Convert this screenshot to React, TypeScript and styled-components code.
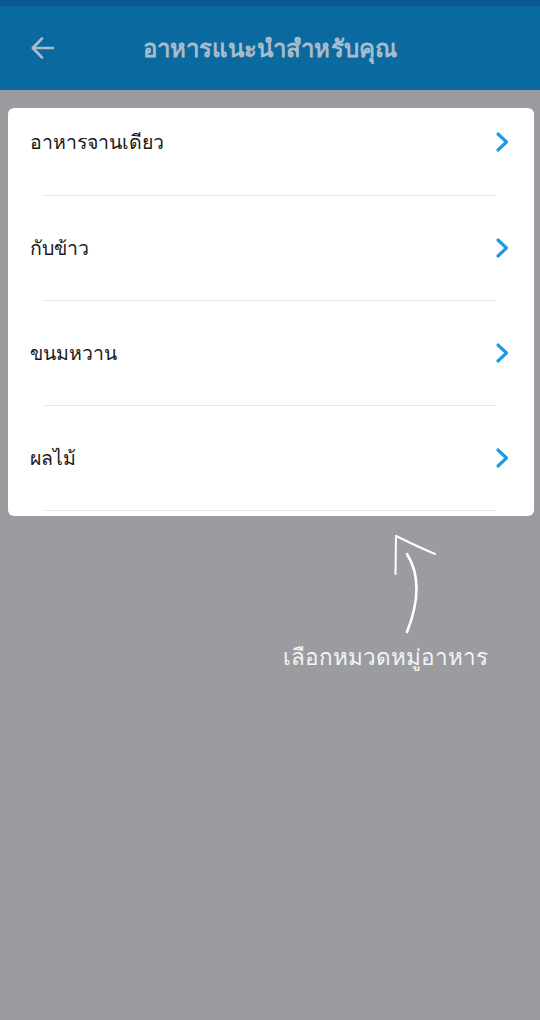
import React from "react";
import styled, { createGlobalStyle } from "styled-components";

const Global = createGlobalStyle`
  html, body { margin: 0; padding: 0; background: #9b9ca0; }
  body { font-family: "Noto Sans", "Open Sans", sans-serif; }
`;

const Page = styled.div`
  width: 540px;
  min-height: 1020px;
  background: #9b9ca0;
  display: flex;
  flex-direction: column;
`;

const StatusBar = styled.div`
  height: 6px;
  background: #0b5890;
`;

const Header = styled.header`
  height: 84px;
  background: #0a6aa0;
  display: flex;
  align-items: center;
  position: relative;
  justify-content: center;
`;

const BackButton = styled.button`
  position: absolute;
  left: 26px;
  top: 50%;
  transform: translateY(-50%);
  background: none;
  border: none;
  padding: 4px;
  display: flex;
`;

const Title = styled.h1`
  margin: 0;
  font-size: 24px;
  font-weight: 700;
  color: #a8bccb;
  letter-spacing: 0.2px;
`;

const Content = styled.main`
  padding: 18px 6px 0 8px;
  display: flex;
  flex-direction: column;
`;

const Card = styled.div`
  background: #ffffff;
  border-radius: 6px;
  display: flex;
  flex-direction: column;
  overflow: hidden;
  padding-bottom: 5px;
`;

const Row = styled.div<{ $first?: boolean }>`
  height: ${(p) => (p.$first ? 88 : 105)}px;
  display: flex;
  flex-direction: column;
`;

const RowMain = styled.div<{ $first?: boolean }>`
  flex: 1;
  display: flex;
  align-items: flex-start;
  justify-content: space-between;
  padding: ${(p) => (p.$first ? 19 : 37)}px 24px 0 22px;
`;

const Label = styled.span`
  font-size: 19.5px;
  color: #1a1a1a;
  line-height: 30px;
`;

const Chevron = styled.span`
  display: flex;
  margin-top: 4px;
`;

const Divider = styled.div`
  height: 1px;
  background: #e6e8ea;
  margin: 0 38px 0 36px;
`;

const HintArea = styled.div`
  position: relative;
  height: 170px;
`;

const ArrowSvg = styled.svg`
  position: absolute;
  left: 376px;
  top: 16px;
`;

const HintText = styled.div`
  position: absolute;
  left: 275px;
  top: 126px;
  font-family: "Noto Serif", "Liberation Serif", serif;
  font-size: 22.5px;
  font-weight: 300;
  line-height: 30px;
  color: #f4f4f4;
`;

const items = ["อาหารจานเดียว", "กับข้าว", "ขนมหวาน", "ผลไม้"];

export default function App() {
  return (
    <>
      <Global />
      <Page>
        <StatusBar />
        <Header>
          <BackButton aria-label="back">
            <svg width="26" height="26" viewBox="0 0 26 26" fill="none" stroke="#a9bccc" strokeWidth="2.6" strokeLinecap="round" strokeLinejoin="round">
              <path d="M23 13H3" />
              <path d="M12 3.5L2.8 13L12 22.5" />
            </svg>
          </BackButton>
          <Title>อาหารแนะนำสำหรับคุณ</Title>
        </Header>
        <Content>
          <Card>
            {items.map((t, i) => (
              <Row key={t} $first={i === 0}>
                <RowMain $first={i === 0}>
                  <Label>{t}</Label>
                  <Chevron>
                    <svg width="16" height="22" viewBox="0 0 16 22" fill="none" stroke="#1e9be2" strokeWidth="3.2" strokeLinecap="round" strokeLinejoin="round">
                      <path d="M4 3L12.5 11L4 19" />
                    </svg>
                  </Chevron>
                </RowMain>
                <Divider />
              </Row>
            ))}
          </Card>
          <HintArea>
            <ArrowSvg width="60" height="110" viewBox="0 0 60 110" fill="none" stroke="#ffffff" strokeLinecap="round">
              <path d="M12 4L11.5 42" strokeWidth="2" />
              <path d="M12 4Q32 14 51 22" strokeWidth="2" />
              <path d="M23 22Q42 52 23 100" strokeWidth="2.6" />
            </ArrowSvg>
            <HintText>เลือกหมวดหมู่อาหาร</HintText>
          </HintArea>
        </Content>
      </Page>
    </>
  );
}
